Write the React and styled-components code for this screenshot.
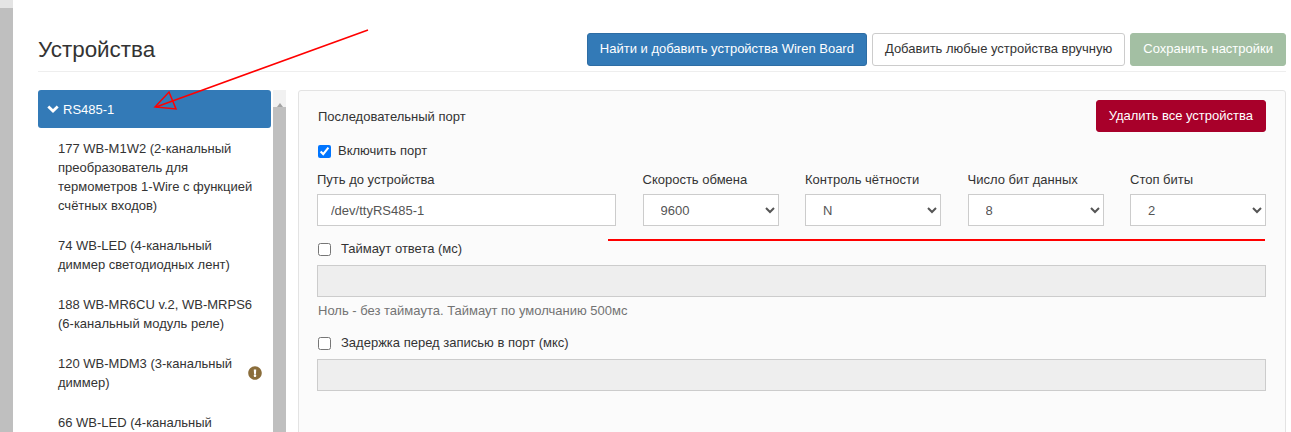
import React from 'react'
import styled, { createGlobalStyle } from 'styled-components'
import { FaExclamationCircle } from 'react-icons/fa'

const GlobalStyle = createGlobalStyle`
    html, body {
        margin: 0;
        height: 432px;
        overflow: hidden;
        background: #fff;
        font-family: "Liberation Sans", Arial, sans-serif;
        font-size: 13px;
        color: #333;
    }
    * { box-sizing: border-box; }
`

const Page = styled.div`
    position: relative;
    display: flex;
    height: 432px;
    overflow: hidden;
`

const PageScroll = styled.div`
    width: 13px;
    flex: none;
    background: linear-gradient(#e4e4e4 0 8px, #bfbfbf 8px);
`

const Main = styled.div`
    flex: 1;
    min-width: 0;
    padding: 33px 5px 0 25px;
`

const Header = styled.div`
    display: flex;
    justify-content: space-between;
    align-items: center;
    height: 39px;
    padding-bottom: 6px;
    border-bottom: 1px solid #eee;
    margin-bottom: 18px;
`

const Title = styled.h1`
    margin: 0;
    padding-top: 2px;
    font-size: 22.4px;
    font-weight: 400;
    color: #333;
`

const Actions = styled.div`
    display: flex;
    gap: 5px;
`

const Button = styled.button`
    height: ${p => p.$h || 33}px;
    padding: 0 12px 1px;
    font: 13px "Liberation Sans", Arial, sans-serif;
    white-space: nowrap;
    border-radius: 3px;
    border: 1px solid ${p => p.$border};
    background: ${p => p.$bg};
    color: ${p => p.$fg || '#fff'};
`

const Columns = styled.div`
    display: flex;
    align-items: flex-start;
`

const Sidebar = styled.div`
    width: 233px;
    flex: none;
`

const ActiveItem = styled.div`
    display: flex;
    align-items: center;
    gap: 4px;
    height: 38px;
    padding: 0 9px;
    background: #337ab7;
    color: #fff;
    border-radius: 3px;
`

const Chevron = () => (
    <svg width="12" height="8" viewBox="0 0 12 8" fill="none">
        <path d="M1.3 1.5 L6 6 L10.7 1.5" stroke="#fff" strokeWidth="2.8" />
    </svg>
)

const Item = styled.div`
    display: flex;
    align-items: center;
    justify-content: space-between;
    padding: 10.5px 9px 10.5px 20px;
    line-height: 19px;
    color: #333;
    svg { width: 14px; height: 14px; flex: none; color: #8a6d3b; }
`

const ItemText = styled.span`
    flex: 0 1 196px;
`

const ListScroll = styled.div`
    width: 13px;
    flex: none;
    margin: 0 12px 0 2px;
    height: 342px;
    display: flex;
    flex-direction: column;
    background: #f1f1f1;
`

const ScrollArrow = styled.div`
    height: 17px;
    display: flex;
    justify-content: center;
    padding-top: 6px;
    &:before {
        content: '';
        border: 3.5px solid transparent;
        border-top: 0;
        border-bottom: 4px solid #a3a3a3;
    }
`

const ScrollThumb = styled.div`
    flex: 1;
    background: #bfbfbf;
`

const Panel = styled.div`
    flex: 1;
    min-width: 0;
    height: 360px;
    padding: 9px 19px 9px 18px;
    background: #fbfbfb;
    border: 1px solid #e3e3e3;
    border-radius: 3px;
`

const PanelTop = styled.div`
    display: flex;
    justify-content: space-between;
    align-items: center;
    margin-bottom: 10px;
    padding-left: 1px;
`

const CheckRow = styled.label`
    display: flex;
    align-items: center;
    gap: ${p => p.$gap || 7}px;
    height: 18px;
    line-height: 18px;
    padding-left: 1px;
    input { margin: 0; width: 13px; height: 13px; }
`

const Fields = styled.div`
    display: grid;
    grid-template-columns: 299px repeat(4, 136px);
    column-gap: 26.5px;
    margin: 9px 0 14px;
`

const Field = styled.div`
    display: flex;
    flex-direction: column;
    gap: 6px;
`

const Label = styled.label`
    line-height: 22px;
    height: 19px;
    color: #333;
`

const controlStyle = `
    width: 100%;
    height: 32px;
    font: 13px "Liberation Sans", Arial, sans-serif;
    color: #555;
    border: 1px solid #ccc;
    border-radius: 0;
    background: #fff;
    padding: 6px 12px 6px 13px;
    outline: none;
`

const TextInput = styled.input`
    ${controlStyle}
    display: block;
    &:disabled { background: #eee; }
`

const Select = styled.select`
    ${controlStyle}
`

const WideInput = styled(TextInput)`
    margin-top: 7px;
`

const Help = styled.div`
    margin: 6px 0 15px;
    padding-left: 1px;
    line-height: 16px;
    height: 16px;
    color: #737373;
`

const Annotation = styled.svg`
    position: absolute;
    left: 0;
    top: 0;
    width: 1291px;
    height: 432px;
    pointer-events: none;
`

const devices = [
    { name: '177 WB-M1W2 (2-канальный преобразователь для термометров 1-Wire с функцией счётных входов)' },
    { name: '74 WB-LED (4-канальный диммер светодиодных лент)' },
    { name: '188 WB-MR6CU v.2, WB-MRPS6 (6-канальный модуль реле)' },
    { name: '120 WB-MDM3 (3-канальный диммер)', warning: true },
    { name: '66 WB-LED (4-канальный диммер светодиодных лент)' },
]

const selects = [
    { label: 'Скорость обмена', value: '9600' },
    { label: 'Контроль чётности', value: 'N' },
    { label: 'Число бит данных', value: '8' },
    { label: 'Стоп биты', value: '2' },
]

const App = () => (
    <Page>
        <GlobalStyle />
        <PageScroll />
        <Main>
            <Header>
                <Title>Устройства</Title>
                <Actions>
                    <Button $bg="#337ab7" $border="#2e6da4">Найти и добавить устройства Wiren Board</Button>
                    <Button $bg="#fff" $border="#ccc" $fg="#333">Добавить любые устройства вручную</Button>
                    <Button $bg="#a3bfa3" $border="#a3bfa3">Сохранить настройки</Button>
                </Actions>
            </Header>
            <Columns>
                <Sidebar>
                    <ActiveItem><Chevron />RS485-1</ActiveItem>
                    {devices.map(device => (
                        <Item key={device.name}>
                            <ItemText>{device.name}</ItemText>
                            {device.warning && <FaExclamationCircle />}
                        </Item>
                    ))}
                </Sidebar>
                <ListScroll>
                    <ScrollArrow />
                    <ScrollThumb />
                </ListScroll>
                <Panel>
                    <PanelTop>
                        <span>Последовательный порт</span>
                        <Button $h={32} $bg="#a8002a" $border="#a8002a">Удалить все устройства</Button>
                    </PanelTop>
                    <CheckRow>
                        <input type="checkbox" defaultChecked />
                        Включить порт
                    </CheckRow>
                    <Fields>
                        <Field>
                            <Label>Путь до устройства</Label>
                            <TextInput defaultValue="/dev/ttyRS485-1" />
                        </Field>
                        {selects.map(item => (
                            <Field key={item.label}>
                                <Label>{item.label}</Label>
                                <Select defaultValue={item.value}>
                                    <option>{item.value}</option>
                                </Select>
                            </Field>
                        ))}
                    </Fields>
                    <CheckRow $gap={10}>
                        <input type="checkbox" />
                        Таймаут ответа (мс)
                    </CheckRow>
                    <WideInput disabled />
                    <Help>Ноль - без таймаута. Таймаут по умолчанию 500мс</Help>
                    <CheckRow $gap={10}>
                        <input type="checkbox" />
                        Задержка перед записью в порт (мкс)
                    </CheckRow>
                    <WideInput disabled />
                </Panel>
            </Columns>
        </Main>
        <Annotation viewBox="0 0 1291 432" fill="none">
            <path d="M368 30 L156 107" stroke="#f00" strokeWidth="1.6" />
            <path d="M155 107 L169 92 L176 109 Z" stroke="#f00" strokeWidth="1.5" />
            <path d="M608 240 L1265 240" stroke="#f00" strokeWidth="2" />
        </Annotation>
    </Page>
)

export default App
